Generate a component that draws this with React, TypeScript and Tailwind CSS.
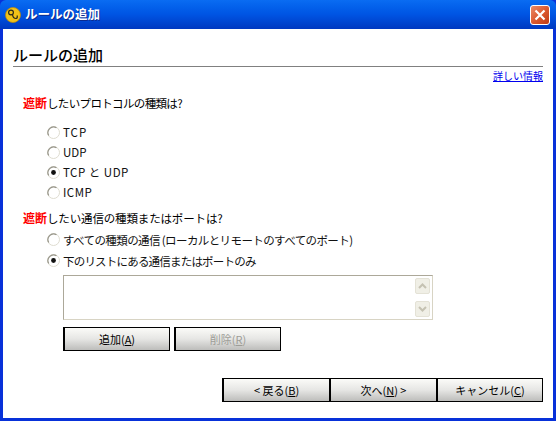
const font = { fontFamily: '"Noto Sans CJK JP", "Liberation Sans", sans-serif' };

function Radio({ checked }: { checked?: boolean }) {
  return (
    <svg width="13" height="13" viewBox="0 0 13 13" className="shrink-0">
      <circle cx="6.5" cy="6.5" r="6" fill="#ffffff" stroke="#dedcd0" />
      <path d="M1.8 9.5 A5.6 5.6 0 0 1 9.5 1.8" fill="none" stroke="#97958a" strokeWidth="1.2" />
      {checked && <circle cx="6.5" cy="6.5" r="2.4" fill="#111111" />}
    </svg>
  );
}

function RadioRow({ label, checked, className }: { label: string; checked?: boolean; className: string }) {
  return (
    <div className={`flex items-center gap-[3px] text-[11.5px] leading-[14px] text-[#111] ${className}`}>
      <Radio checked={checked} />
      <span>{label}</span>
    </div>
  );
}

function Btn({ children, disabled, last }: { children: React.ReactNode; disabled?: boolean; last?: boolean }) {
  return (
    <div
      className={`w-[107px] h-[24px] flex items-center justify-center border-black border-y border-l-2 text-[11px] bg-gradient-to-b from-[#fbfbf8] via-[#e6e6e4] to-[#bdbdbb] ${
        last ? 'border-r' : ''
      } ${disabled ? 'text-[#9d9d97]' : 'text-black'}`}
    >
      {children}
    </div>
  );
}

function Key({ k }: { k: string }) {
  return (
    <>
      (<span className="underline">{k}</span>)
    </>
  );
}

function Question({ text, className }: { text: string; className: string }) {
  return (
    <div className="text-[11.5px] leading-[16px] text-black">
      <span className="text-[12px] text-[#ff0000] font-bold">遮断</span>
      <span className={className}>{text}</span>
    </div>
  );
}

export default function App() {
  return (
    <div style={font} className="w-[556px] h-[421px] flex flex-col overflow-hidden bg-[#0831d9]">
      <div className="h-[29px] shrink-0 flex items-center rounded-t-[6px] bg-gradient-to-b from-[#0a6cf2] via-[#0054e3] to-[#0038c0] pl-[5px] pr-[6px]">
        <svg width="16" height="16" viewBox="0 0 16 16" className="shrink-0">
          <circle cx="8" cy="8" r="7.5" fill="#f2c318" stroke="#b98a10" strokeWidth="0.8" />
          <circle cx="6" cy="5.5" r="2.4" fill="none" stroke="#2a2a1a" strokeWidth="1.2" />
          <path d="M7.5 7.5 Q8 11.5 11 11.5 Q13 11 12 8.5" fill="none" stroke="#2a2a1a" strokeWidth="1.2" />
        </svg>
        <span className="ml-[4px] text-[12.5px] font-bold text-white [text-shadow:1px_1px_0_#0a2a90]">ルールの追加</span>
        <div className="ml-auto w-[20px] h-[20px] rounded-[3px] border border-white bg-gradient-to-br from-[#e98a66] via-[#dc5a30] to-[#c03a12] flex items-center justify-center">
          <svg width="12" height="12" viewBox="0 0 12 12">
            <path d="M1.5 1.5 L10.5 10.5 M10.5 1.5 L1.5 10.5" stroke="#ffffff" strokeWidth="2.2" />
          </svg>
        </div>
      </div>

      <div className="flex-1 mx-[3px] mb-[3px] bg-white flex flex-col">
        <div className="ml-[10px] mr-[10px] mt-[17px] h-[21px] border-b border-[#808080] text-[15px] leading-[18px] font-medium text-black">
          ルールの追加
        </div>
        <div className="mr-[10px] mt-[2px] self-end text-[10px] leading-[14px] text-[#0000ee] underline">詳しい情報</div>

        <div className="ml-[20px] mt-[12px]">
          <Question text="したいプロトコルの種類は?" className="tracking-[-0.65px]" />
        </div>
        <RadioRow label="TCP" className="ml-[44px] mt-[11px] h-[20px] tracking-[1px]" />
        <RadioRow label="UDP" className="ml-[44px] h-[20px]" />
        <RadioRow label="TCP と UDP" checked className="ml-[44px] h-[20px] tracking-[0.5px]" />
        <RadioRow label="ICMP" className="ml-[44px] h-[20px] tracking-[0.5px]" />

        <div className="ml-[20px] mt-[8px]">
          <Question text="したい通信の種類またはポートは?" className="tracking-[-0.15px]" />
        </div>
        <RadioRow
          label="すべての種類の通信 (ローカルとリモートのすべてのポート)"
          className="ml-[44px] mt-[3px] h-[21px] tracking-[-0.6px]"
        />
        <RadioRow label="下のリストにある通信またはポートのみ" checked className="ml-[44px] h-[21px] tracking-[-0.8px]" />

        <div className="ml-[60px] mt-[4px] w-[370px] h-[45px] border border-[#aca899] border-b-[#d8d4c4] border-r-[#d8d4c4] flex justify-end p-[2px]">
          <div className="w-[15px] flex flex-col justify-between">
            <div className="h-[16px] bg-[#f0efe6] rounded-[2px] border border-[#e4e2d6] flex items-center justify-center">
              <svg width="9" height="6" viewBox="0 0 9 6">
                <path d="M1 5 L4.5 1.5 L8 5" fill="none" stroke="#c5c2b2" strokeWidth="2" />
              </svg>
            </div>
            <div className="h-[16px] bg-[#f0efe6] rounded-[2px] border border-[#e4e2d6] flex items-center justify-center">
              <svg width="9" height="6" viewBox="0 0 9 6">
                <path d="M1 1 L4.5 4.5 L8 1" fill="none" stroke="#c5c2b2" strokeWidth="2" />
              </svg>
            </div>
          </div>
        </div>

        <div className="ml-[60px] mt-[7px] flex gap-[4px]">
          <Btn last>追加<Key k="A" /></Btn>
          <Btn disabled last>削除<Key k="R" /></Btn>
        </div>

        <div className="mt-auto mb-[16px] mr-[10px] self-end flex">
          <Btn>&lt; 戻る<Key k="B" /></Btn>
          <Btn>次へ<Key k="N" /> &gt;</Btn>
          <Btn last>キャンセル<Key k="C" /></Btn>
        </div>
      </div>
    </div>
  );
}
